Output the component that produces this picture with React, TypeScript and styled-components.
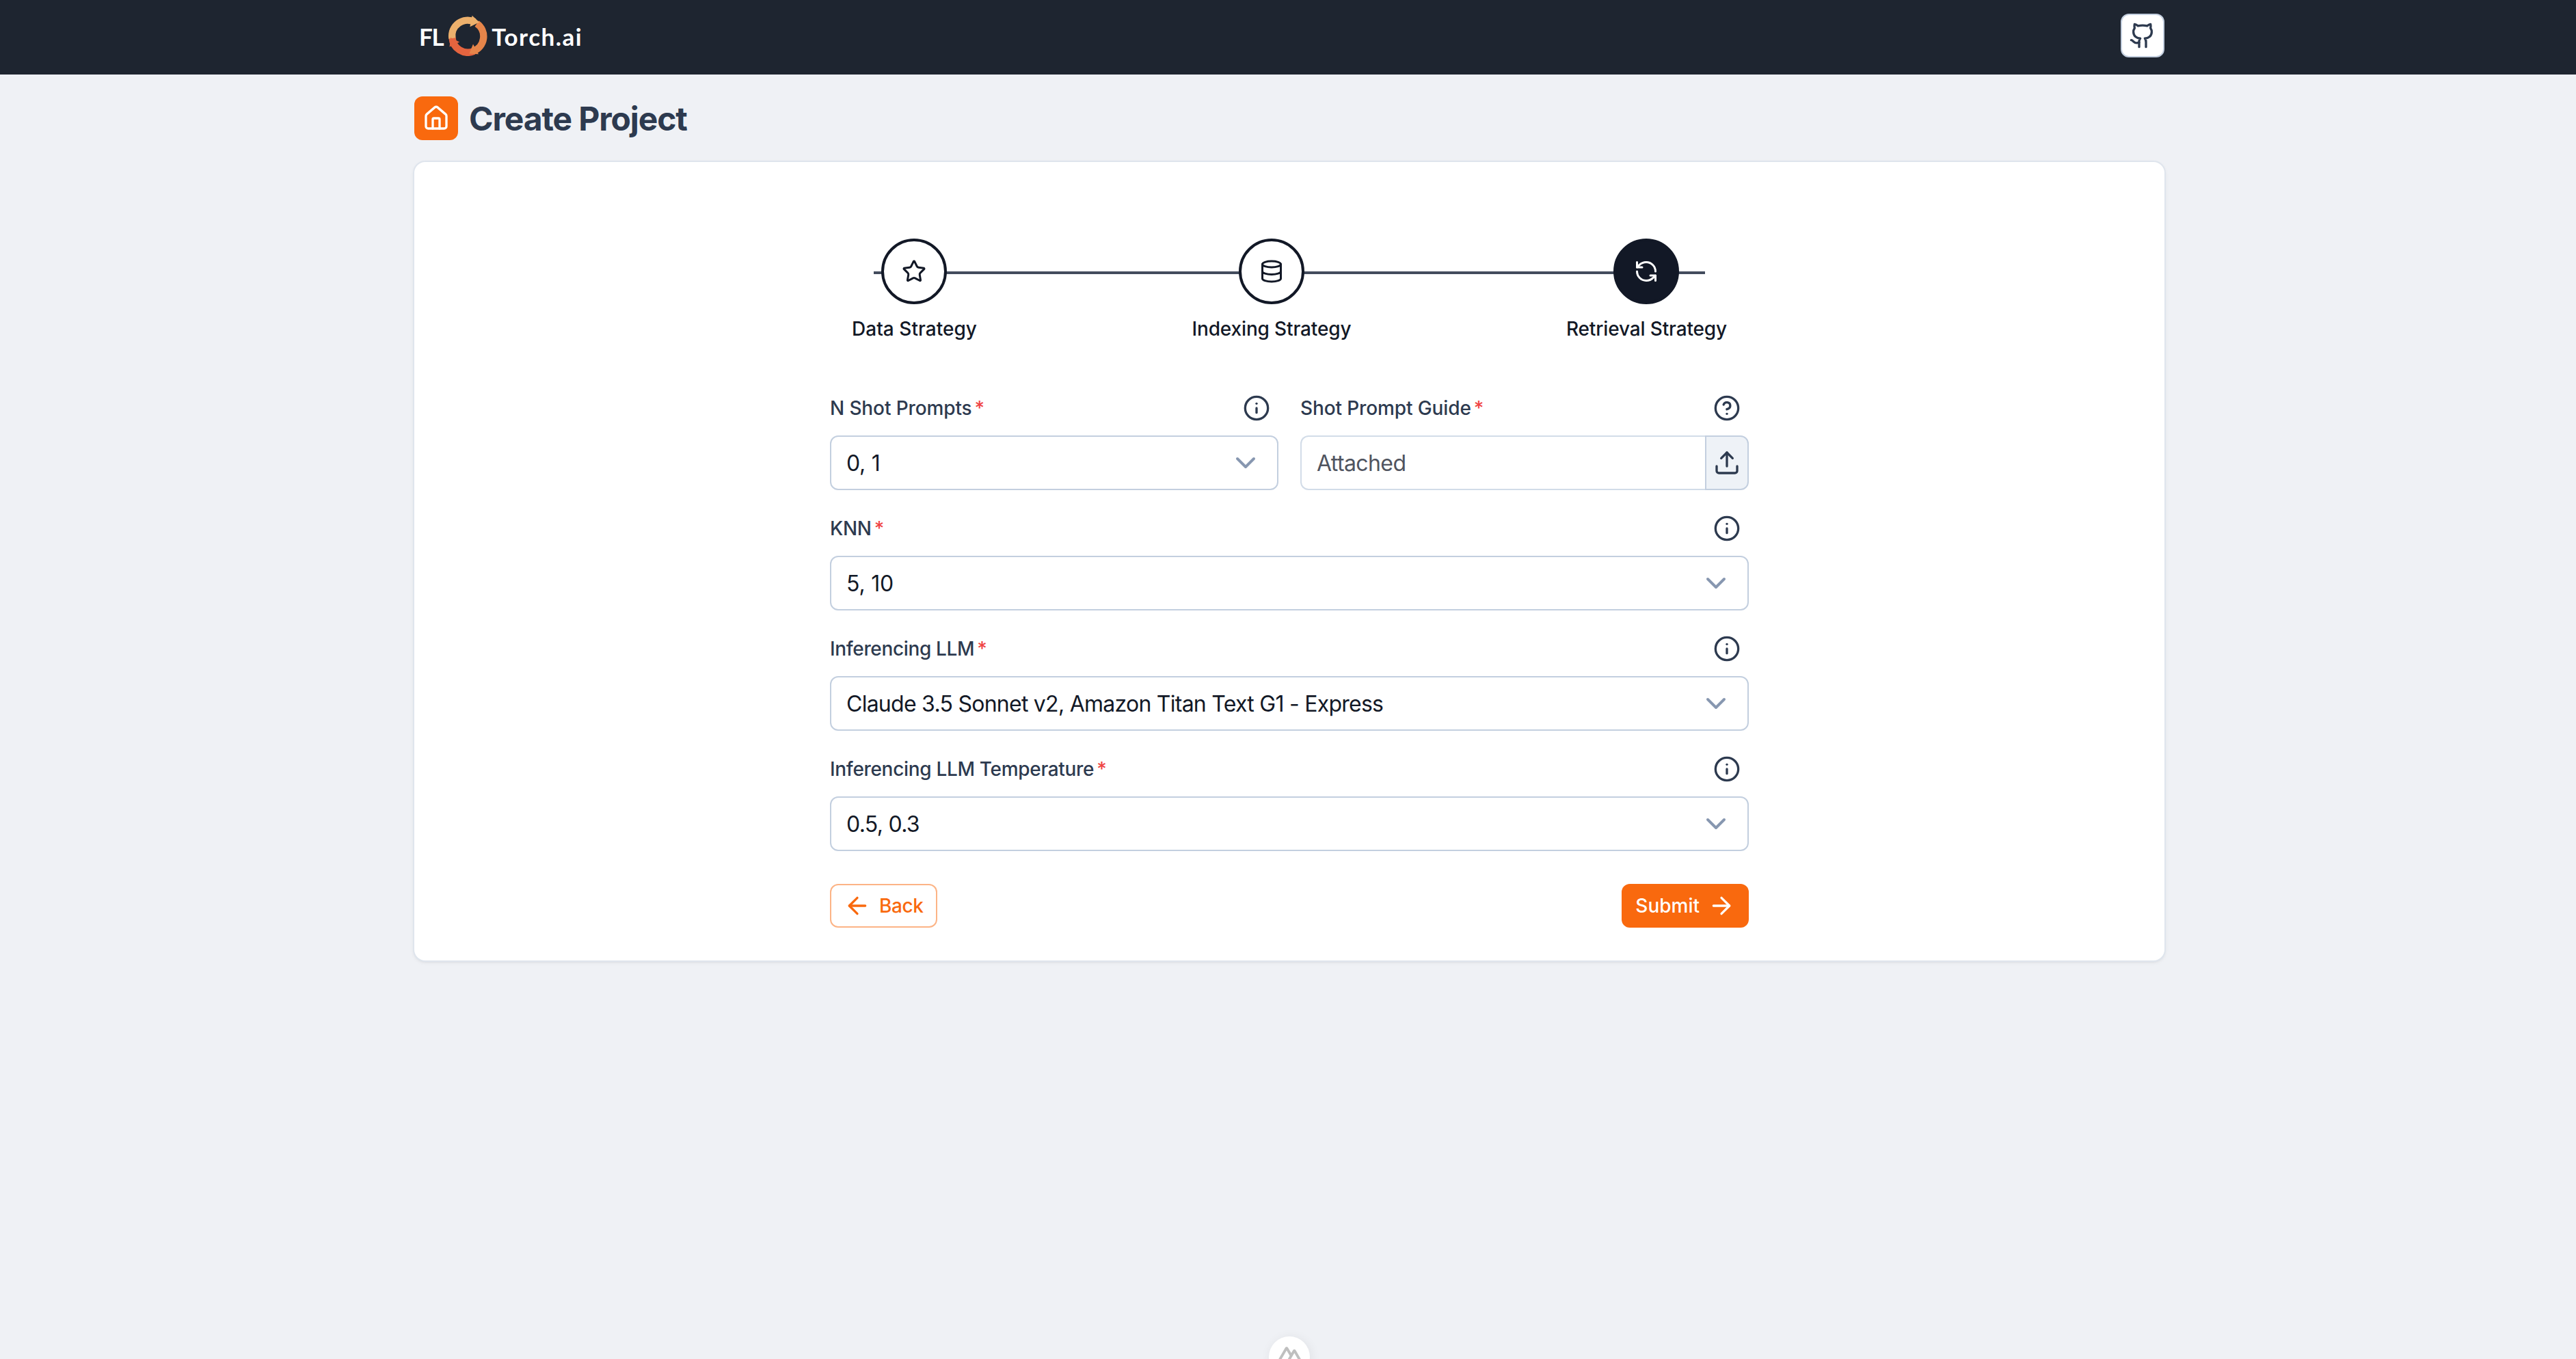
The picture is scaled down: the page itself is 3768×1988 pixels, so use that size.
import React from "react";
import styled, { createGlobalStyle } from "styled-components";
import {
  ArrowLeft,
  ArrowRight,
  ChevronDown,
  CircleHelp,
  Database,
  Github,
  House,
  Info,
  RefreshCcw,
  Star,
  Upload,
} from "lucide-react";

const color = {
  header: "#1e2530",
  page: "#eff1f5",
  ink: "#121826",
  slate: "#2d3a4f",
  line: "#c3cfdf",
  soft: "#dfe5ed",
  orange: "#f9690e",
};

const GlobalStyle = createGlobalStyle`
  *, *::before, *::after { box-sizing: border-box; }
  html, body { margin: 0; height: 100%; overflow: hidden; }
  body {
    background: ${color.page};
    color: ${color.ink};
    font-family: Inter, "Liberation Sans", sans-serif;
    font-size: 28px;
    line-height: 40px;
  }
  svg { display: block; flex: none; }
`;

const Header = styled.header`
  height: 109px;
  background: ${color.header};
  padding-bottom: 5px;
  display: flex;
`;

const Container = styled.div`
  width: 2560px;
  margin: 0 auto;
  position: relative;
  left: 2px;
`;

const HeaderInner = styled(Container)`
  display: flex;
  align-items: center;
  justify-content: space-between;
`;

const Logo = styled.a`
  display: flex;
  align-items: center;
  padding-left: 7px;
  color: #fff;
  font-family: Lato, "Liberation Sans", sans-serif;
  font-weight: 700;
  font-size: 35px;
  line-height: 60px;
`;

const LogoText = styled.span<{ $tracking: number }>`
  letter-spacing: ${(p) => p.$tracking}px;
  padding-top: 2px;
`;

const Ring = styled.svg`
  margin: 0 6px 1px 7px;
`;

const SquareButton = styled.button<{ $solid?: boolean }>`
  width: 64px;
  height: 64px;
  padding: 0;
  display: flex;
  align-items: center;
  justify-content: center;
  border-radius: 12px;
  border: ${(p) => (p.$solid ? "0" : `2px solid ${color.line}`)};
  background: ${(p) => (p.$solid ? color.orange : "#fff")};
  color: ${(p) => (p.$solid ? "#fff" : color.slate)};
`;

const TitleRow = styled.div`
  display: flex;
  align-items: center;
  gap: 16px;
  padding: 32px 0;
`;

const Title = styled.h1`
  margin: 0;
  color: ${color.slate};
  font-size: 48px;
  font-weight: 700;
  line-height: 64px;
  letter-spacing: -1.1px;
  padding-top: 1px;
  height: 64px;
`;

const Card = styled.section`
  height: 1168px;
  border-radius: 16px;
  background: #fff;
  padding: 112px 608px 48px;
  box-shadow: 0 0 0 2px ${color.soft}, 0 2px 6px 0 rgba(0, 0, 0, 0.1), 0 2px 4px -2px rgba(0, 0, 0, 0.1);
`;

const Steps = styled.ol`
  list-style: none;
  margin: 0 0 76px;
  padding: 0 32px;
  display: flex;
  justify-content: space-between;
  position: relative;

  &::before {
    content: "";
    position: absolute;
    left: 64px;
    right: 64px;
    top: 48px;
    height: 4px;
    background: #434c5d;
  }
`;

const Step = styled.li`
  position: relative;
  display: flex;
  flex-direction: column;
  align-items: center;
  gap: 16px;
  font-weight: 500;
`;

const StepCircle = styled.span<{ $active?: boolean }>`
  width: 96px;
  height: 96px;
  border-radius: 50%;
  border: 4px solid ${color.ink};
  display: flex;
  align-items: center;
  justify-content: center;
  background: ${(p) => (p.$active ? color.ink : "#fff")};
  color: ${(p) => (p.$active ? "#fff" : color.ink)};
`;

const StepLabel = styled.span<{ $tracking: number }>`
  height: 40px;
  letter-spacing: ${(p) => p.$tracking}px;
`;

const Form = styled.form`
  display: flex;
  flex-direction: column;
  gap: 36px;
`;

const Columns = styled.div`
  display: grid;
  grid-template-columns: 1fr 1fr;
  gap: 32px;
`;

const FieldBox = styled.div`
  display: flex;
  flex-direction: column;
  gap: 20px;
`;

const FieldHead = styled.div`
  height: 40px;
  padding-right: 12px;
  display: flex;
  align-items: center;
  justify-content: space-between;
  color: ${color.slate};
`;

const Label = styled.label<{ $tracking: number }>`
  font-weight: 500;
  letter-spacing: ${(p) => p.$tracking}px;
  &::after {
    content: "*";
    margin-left: 4px;
    color: #ef4444;
  }
`;

const Select = styled.div`
  height: 80px;
  padding: 0 22px;
  border: 2px solid ${color.line};
  border-radius: 12px;
  display: flex;
  align-items: center;
  justify-content: space-between;
  font-size: 32px;

  svg { color: #8797b0; }
`;

const Value = styled.span<{ $tracking?: number }>`
  padding-top: 2px;
  letter-spacing: ${(p) => p.$tracking ?? 0}px;
`;

const FileGroup = styled.div`
  height: 80px;
  display: flex;
`;

const FileText = styled.div`
  flex: 1;
  padding: 0 22px;
  border: 2px solid #d2dce8;
  border-right: 0;
  border-radius: 12px 0 0 12px;
  display: flex;
  align-items: center;
  font-size: 32px;
  color: #50545f;
`;

const FileButton = styled.button`
  width: 64px;
  padding: 0;
  border: 2px solid ${color.line};
  border-radius: 0 12px 12px 0;
  background: #eef2f7;
  color: ${color.slate};
  display: flex;
  align-items: center;
  justify-content: center;
`;

const Actions = styled.div`
  display: flex;
  justify-content: space-between;
  padding-top: 12px;
`;

const Button = styled.button<{ $outline?: boolean }>`
  height: 64px;
  padding: 0 20px;
  display: flex;
  align-items: center;
  gap: 12px;
  border: 0;
  border-radius: 12px;
  font: 500 28px/40px Inter, "Liberation Sans", sans-serif;
  letter-spacing: ${(p) => (p.$outline ? "-0.4px" : "0")};
  background: ${(p) => (p.$outline ? "#fff" : color.orange)};
  color: ${(p) => (p.$outline ? color.orange : "#fff")};
  box-shadow: ${(p) => (p.$outline ? "inset 0 0 0 2px #fcb486" : "none")};
`;

const DevBadge = styled.div`
  position: fixed;
  left: 1856px;
  top: 1955px;
  width: 60px;
  height: 60px;
  border-radius: 50%;
  background: #fff;
  box-shadow: 2px 2px 16px rgba(0, 0, 0, 0.07);
  display: flex;
  justify-content: center;
  padding-top: 9px;
`;

const steps = [
  { label: "Data Strategy", Icon: Star, tracking: 0.03 },
  { label: "Indexing Strategy", Icon: Database, tracking: -0.14 },
  { label: "Retrieval Strategy", Icon: RefreshCcw, tracking: -0.14, active: true },
];

type FieldProps = { label: string; labelTracking?: number };

function Field({
  label,
  labelTracking = -0.12,
  help,
  children,
}: FieldProps & { help?: boolean; children: React.ReactNode }) {
  const Icon = help ? CircleHelp : Info;
  return (
    <FieldBox>
      <FieldHead>
        <Label $tracking={labelTracking}>{label}</Label>
        <Icon size={40} />
      </FieldHead>
      {children}
    </FieldBox>
  );
}

function SelectField({ value, tracking, ...field }: FieldProps & { value: string; tracking?: number }) {
  return (
    <Field {...field}>
      <Select>
        <Value $tracking={tracking}>{value}</Value>
        <ChevronDown size={48} />
      </Select>
    </Field>
  );
}

function FlameRing() {
  return (
    <Ring width="58" height="60" viewBox="0 0 58 60">
      <g fill="none" strokeWidth="10.4">
        <path d="M42.5 12.5 A22.9 22.9 0 0 1 37 52.9" stroke="#e6854a" />
        <path d="M38 53 A22.9 22.9 0 0 1 6.5 33" stroke="#e4643f" />
        <path d="M6.4 34 A22.9 22.9 0 0 1 39 10" stroke="#ecb06c" />
      </g>
      <path d="M35.6 0.8 L46.2 10.6 L32.4 17.2 Z" fill="#ecb06c" />
      <path d="M37 42.4 L45 57.2 L31.4 56.4 Z" fill="#e6854a" />
      <path d="M4 33 L17.2 39.4 L2.6 46.6 Z" fill="#e4643f" />
    </Ring>
  );
}

export default function App() {
  return (
    <>
      <GlobalStyle />
      <Header>
        <HeaderInner>
          <Logo>
            <LogoText $tracking={-1.4}>FL</LogoText>
            <FlameRing />
            <LogoText $tracking={1.5}>Torch.ai</LogoText>
          </Logo>
          <SquareButton>
            <Github size={40} />
          </SquareButton>
        </HeaderInner>
      </Header>
      <Container as="main">
        <TitleRow>
          <SquareButton $solid>
            <House size={40} />
          </SquareButton>
          <Title>Create Project</Title>
        </TitleRow>
        <Card>
          <Steps>
            {steps.map(({ label, Icon, tracking, active }) => (
              <Step key={label}>
                <StepCircle $active={active}>
                  <Icon size={36} />
                </StepCircle>
                <StepLabel $tracking={tracking}>{label}</StepLabel>
              </Step>
            ))}
          </Steps>
          <Form>
            <Columns>
              <SelectField label="N Shot Prompts" value="0, 1" tracking={-0.3} />
              <Field label="Shot Prompt Guide" help>
                <FileGroup>
                  <FileText>
                    <Value $tracking={-0.6}>Attached</Value>
                  </FileText>
                  <FileButton type="button">
                    <Upload size={40} />
                  </FileButton>
                </FileGroup>
              </Field>
            </Columns>
            <SelectField label="KNN" labelTracking={-0.3} value="5, 10" tracking={-0.2} />
            <SelectField
              label="Inferencing LLM"
              labelTracking={-0.35}
              value="Claude 3.5 Sonnet v2, Amazon Titan Text G1 - Express"
              tracking={-0.74}
            />
            <SelectField
              label="Inferencing LLM Temperature"
              labelTracking={-0.32}
              value="0.5, 0.3"
              tracking={-0.7}
            />
            <Actions>
              <Button type="button" $outline>
                <ArrowLeft size={40} />
                Back
              </Button>
              <Button type="button">
                Submit
                <ArrowRight size={40} />
              </Button>
            </Actions>
          </Form>
        </Card>
      </Container>
      <DevBadge>
        <svg width="37" height="37" viewBox="0 0 324 324" fill="#bfbfbf">
          <path d="M181.767 270H302.211C306.037 270 309.795 269.003 313.108 267.107C316.421 265.211 319.172 262.484 321.084 259.2C322.996 255.915 324.002 252.19 324 248.399C323.998 244.607 322.989 240.883 321.074 237.601L240.187 98.744C238.275 95.461 235.525 92.734 232.213 90.839C228.901 88.943 225.143 87.945 221.318 87.945C217.494 87.945 213.736 88.943 210.424 90.839C207.112 92.734 204.361 95.461 202.449 98.744L181.767 134.272L141.329 64.798C139.416 61.515 136.664 58.788 133.351 56.893C130.038 54.998 126.28 54 122.454 54C118.629 54 114.871 54.998 111.558 56.893C108.245 58.788 105.493 61.515 103.58 64.798L2.926 237.601C-4 250 4 270 21.768 270H97.368C127.326 270 149.419 256.958 164.621 231.513L201.53 168.165L221.3 134.272L280.631 236.1H201.53L181.767 270ZM96.161 236.065L43.398 236.054L122.49 100.291L161.953 168.165L135.531 213.543C125.436 230.051 113.968 236.065 96.161 236.065Z" />
        </svg>
      </DevBadge>
    </>
  );
}
